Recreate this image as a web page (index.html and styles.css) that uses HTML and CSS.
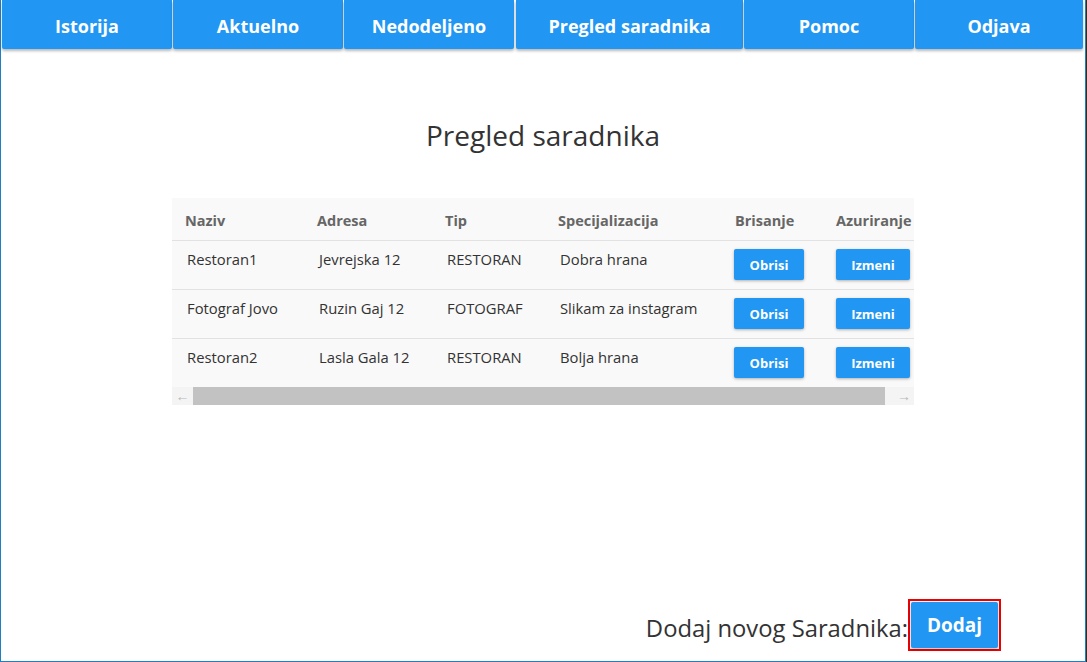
FILE: index.html
```html
<!DOCTYPE html>
<html>
<head>
<meta charset="utf-8">
<link rel="stylesheet" href="styles.css">
</head>
<body>
<div class="window">
  <nav class="nav">
    <a class="nav-btn">Istorija</a>
    <a class="nav-btn w171">Aktuelno</a>
    <a class="nav-btn">Nedodeljeno</a>
    <a class="nav-btn wide">Pregled saradnika</a>
    <a class="nav-btn">Pomoc</a>
    <a class="nav-btn last">Odjava</a>
  </nav>
  <main class="main">
    <h1 class="title">Pregled saradnika</h1>
    <div class="table-wrap">
      <div class="table">
        <div class="row head">
          <div class="cell">Naziv</div>
          <div class="cell">Adresa</div>
          <div class="cell">Tip</div>
          <div class="cell">Specijalizacija</div>
          <div class="cell">Brisanje</div>
          <div class="cell">Azuriranje</div>
        </div>
        <div class="row">
          <div class="cell">Restoran1</div>
          <div class="cell">Jevrejska 12</div>
          <div class="cell">RESTORAN</div>
          <div class="cell">Dobra hrana</div>
          <div class="cell btn-cell"><button class="tbtn">Obrisi</button></div>
          <div class="cell btn-cell"><button class="tbtn">Izmeni</button></div>
        </div>
        <div class="row">
          <div class="cell">Fotograf Jovo</div>
          <div class="cell">Ruzin Gaj 12</div>
          <div class="cell">FOTOGRAF</div>
          <div class="cell">Slikam za instagram</div>
          <div class="cell btn-cell"><button class="tbtn">Obrisi</button></div>
          <div class="cell btn-cell"><button class="tbtn">Izmeni</button></div>
        </div>
        <div class="row">
          <div class="cell">Restoran2</div>
          <div class="cell">Lasla Gala 12</div>
          <div class="cell">RESTORAN</div>
          <div class="cell">Bolja hrana</div>
          <div class="cell btn-cell"><button class="tbtn">Obrisi</button></div>
          <div class="cell btn-cell"><button class="tbtn">Izmeni</button></div>
        </div>
      </div>
      <div class="scrollbar">
        <span class="arrow">&#8592;</span>
        <span class="thumb"></span>
        <span class="arrow right">&#8594;</span>
      </div>
    </div>
    <div class="spacer"></div>
    <div class="add">
      <span class="add-label">Dodaj novog Saradnika:</span>
      <span class="add-frame"><button class="add-btn">Dodaj</button></span>
    </div>
  </main>
</div>
</body>
</html>
```

FILE: styles.css
```css
html, body {
  margin: 0;
  padding: 0;
  background: #3a2a1e;
}
body {
  font-family: "Open Sans", "Noto Sans", sans-serif;
  width: 1087px;
  height: 662px;
  overflow: hidden;
}
.window {
  box-sizing: border-box;
  width: 1086px;
  height: 662px;
  background: #ffffff;
  border-left: 1px solid #1f7fc4;
  border-right: 1px solid #1f7fc4;
  border-bottom: 1px solid #1f7fc4;
  display: flex;
  flex-direction: column;
}
.nav {
  display: flex;
  gap: 1px;
  padding-left: 1px;
  height: 49px;
  flex-shrink: 0;
}
.nav-btn {
  box-sizing: border-box;
  width: 170px;
  height: 49px;
  background: #2196f3;
  color: #ffffff;
  font-weight: 700;
  font-size: 18px;
  display: flex;
  align-items: center;
  justify-content: center;
  border-radius: 0 0 2px 2px;
  box-shadow: 0 2px 3px rgba(0,0,0,0.28);
  padding-top: 2px;
}
.nav-btn.w171 { width: 170px; }
.nav-btn.wide { width: 227px; margin-left: 1px; }
.nav-btn.last { width: 168px; }
.main {
  flex: 1;
  display: flex;
  flex-direction: column;
}
.title {
  margin: 68px 0 0 0;
  text-align: center;
  font-weight: 400;
  font-size: 28px;
  line-height: 36px;
  color: #333333;
}
.table-wrap {
  margin: 45px 0 0 171px;
  width: 742px;
  background: #f9f9f9;
}
.table {
  overflow: hidden;
  width: 742px;
}
.row {
  display: grid;
  grid-template-columns: 132px 128px 113px 177px 101px 120px;
  width: 771px;
  height: 49px;
  border-top: 1px solid #e2e2e2;
  box-sizing: border-box;
  font-size: 14.8px;
  color: #333333;
}
.row.head {
  border-top: none;
  height: 42px;
  font-weight: 700;
  color: #666666;
  font-size: 14.5px;
}
.cell {
  padding-left: 15px;
  padding-top: 8px;
  white-space: nowrap;
}
.row.head .cell {
  padding-left: 13px;
  padding-top: 13px;
}
.btn-cell {
  padding-left: 12px;
  padding-top: 8px;
}
.row .cell:nth-child(6) { padding-left: 13px; }
.tbtn {
  font-family: inherit;
  background: #2196f3;
  color: #ffffff;
  border: none;
  border-radius: 2px;
  font-weight: 700;
  font-size: 13px;
  height: 31px;
  width: 70px;
  padding: 0;
  box-shadow: 0 1px 3px rgba(0,0,0,0.3);
}
.row .cell:nth-child(6) .tbtn { width: 74px; }
.scrollbar {
  display: flex;
  align-items: stretch;
  height: 18px;
  background: #f4f4f4;
}
.arrow {
  width: 21px;
  color: #b8b8b8;
  font-size: 14px;
  line-height: 17px;
  text-align: center;
}
.arrow.right {
  width: 29px;
  text-align: right;
  padding-right: 3px;
  box-sizing: border-box;
}
.thumb {
  flex: 1;
  background: #c2c2c2;
}
.spacer { flex: 1; }
.add {
  display: flex;
  justify-content: flex-end;
  align-items: center;
  padding-right: 84px;
  margin-bottom: 10px;
}
.add-label {
  font-size: 23.8px;
  color: #333333;
  margin-right: 0;
  padding-top: 6px;
}
.add-frame {
  border: 2px solid #ee0000;
  padding: 1px;
  display: flex;
}
.add-btn {
  font-family: inherit;
  background: #2196f3;
  color: #ffffff;
  border: none;
  border-radius: 2px;
  width: 87px;
  height: 46px;
  font-size: 19px;
  font-weight: 700;
  padding: 0;
  box-shadow: 0 1px 3px rgba(0,0,0,0.3);
}
```
